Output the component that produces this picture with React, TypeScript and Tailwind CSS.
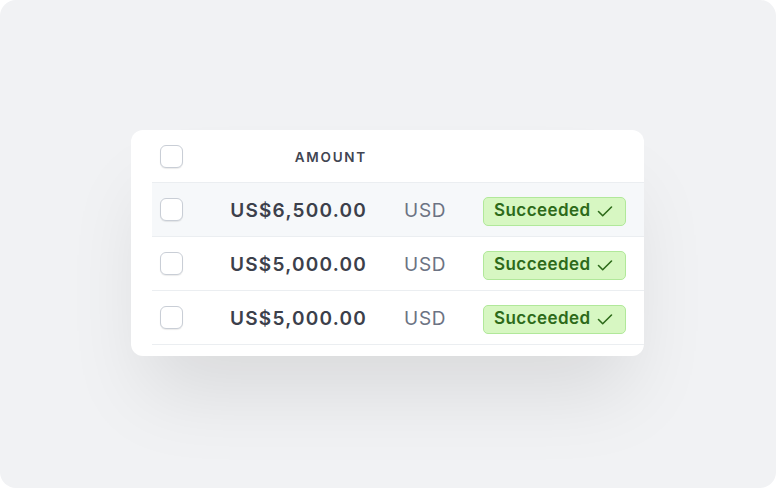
import React from "react";

const rows = ["US$6,500.00", "US$5,000.00", "US$5,000.00"];

function Checkbox() {
  return (
    <div className="h-[23px] w-[23px] rounded-[6px] border border-[#c9ced6] bg-white shadow-[0_1px_1px_rgba(0,0,0,0.08)]" />
  );
}

function Check() {
  return (
    <svg width="18" height="18" viewBox="0 0 18 18" fill="none">
      <path d="M2.5 9.5l4.2 4.2L15.5 5" stroke="#2d6a1a" strokeWidth="1.6" strokeLinecap="round" strokeLinejoin="round" />
    </svg>
  );
}

export default function App() {
  return (
    <div className="h-[488px] w-[776px] bg-white" style={{ fontFamily: "Inter, 'Noto Sans', sans-serif" }}>
      <div className="flex h-full w-full items-start justify-start rounded-[16px] bg-[#f1f2f4] pl-[131px] pt-[130px]">
        <div className="w-[513px] overflow-hidden rounded-[12px] bg-white pb-[11px] pl-[21px] shadow-[0_50px_80px_-15px_rgba(0,0,0,0.1)]">
          <div className="flex h-[53px] items-center border-b border-[#ebeef1]">
            <div className="pl-2">
              <Checkbox />
            </div>
            <div className="w-[184px] pt-[2px] text-right text-[13.5px] font-semibold tracking-[0.13em] text-[#414552]">AMOUNT</div>
          </div>
          {rows.map((amt, i) => (
            <div
              key={i}
              className={`flex h-[54px] items-center border-b border-[#ebeef1] ${i === 0 ? "bg-[#f6f8fa]" : "bg-white"}`}
            >
              <div className="pl-2">
                <Checkbox />
              </div>
              <div className="w-[184px] pt-[3px] text-right text-[19px] font-semibold tracking-[0.065em] text-[#3c404b]">{amt}</div>
              <div className="ml-[37px] w-[79px] pt-[3px] text-[19px] tracking-[0.04em] text-[#6c7383]">USD</div>
              <div className="mt-[3px] flex h-[29px] w-[143px] items-center gap-[6px] rounded-[5px] border border-[#b1e89a] bg-[#d7f7c2] pl-[10px] text-[17px] font-semibold tracking-[0.025em] text-[#2d6a1a]">
                <span>Succeeded</span>
                <Check />
              </div>
            </div>
          ))}
        </div>
      </div>
    </div>
  );
}
